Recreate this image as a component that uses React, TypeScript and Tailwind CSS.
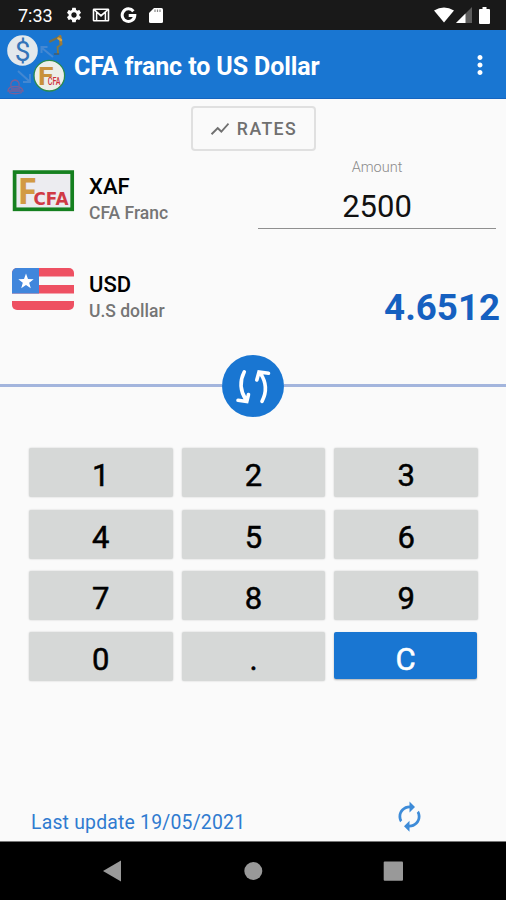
import React from 'react';
import { MdAutorenew, MdMoreVert, MdSettings, MdShowChart } from 'react-icons/md';
import clsx from 'clsx';

const KEYS = ['1', '2', '3', '4', '5', '6', '7', '8', '9', '0', '.', 'C'];

export default function App() {
  return (
    <div className="w-[506px] h-[900px] flex flex-col overflow-hidden bg-[#fafafa] font-['Roboto',sans-serif] text-black">
      <StatusBar />
      <AppBar />

      <main className="flex-1 min-h-0 flex flex-col">
        <div className="h-[52px] flex justify-center pt-[7px]">
          <button className="w-[125px] h-[45px] flex items-center justify-center gap-[6px] rounded border-2 border-[#e0e0e0] text-[#707070]">
            <MdShowChart className="w-[22px] h-[22px]" />
            <span className="pt-[2px] text-[17.7px] leading-none font-medium tracking-[1.4px]">RATES</span>
          </button>
        </div>

        {/* Source currency */}
        <div className="h-[98px] flex">
          <CurrencyLabel code="XAF" name="CFA Franc" flag={<CfaFlag />} />
          <div className="ml-auto mr-[10px] w-[238px] flex flex-col items-center">
            <span className="mt-[8px] text-[14.5px] leading-[17px] font-light text-[#8a8a8a]">Amount</span>
            <div className="h-[53px] w-full border-b-[1.5px] border-[#8f8f8f] text-center text-[31px] leading-[62px] text-[#111]">
              2500
            </div>
          </div>
        </div>

        {/* Converted amount */}
        <div className="h-[105.5px] flex">
          <CurrencyLabel code="USD" name="U.S dollar" flag={<UsFlag />} />
          <span className="ml-auto mr-[6px] mt-[38px] text-[36.7px] leading-[42px] font-bold text-[#1560c0]">
            4.6512
          </span>
        </div>

        {/* Swap */}
        <div className="h-[62px] flex items-center">
          <div className="flex-1 h-[3px] bg-[#a3b5dd]" />
          <button className="w-[62px] h-[62px] rounded-full bg-[#1976d2]">
            <SwapIcon />
          </button>
          <div className="flex-1 h-[3px] bg-[#a3b5dd]" />
        </div>

        {/* Keypad */}
        <div className="mt-[31.7px] ml-[29px] mr-[28px] grid grid-cols-3 gap-x-[9px] gap-y-[12.4px]">
          {KEYS.map(key => (
            <button
              key={key}
              className={clsx(
                'rounded-[2px] pt-px text-[31px] leading-[53px] [-webkit-text-stroke:0.5px]',
                key === 'C'
                  ? 'h-[47px] mr-px bg-[#1976d2] text-white shadow-[0_1px_2px_rgba(0,0,0,0.3)]'
                  : 'h-[49px] bg-[#d6d8d7] shadow-[0_0_2px_rgba(0,0,0,0.2)]'
              )}
            >
              {key}
            </button>
          ))}
        </div>

        <div className="mt-auto mb-[6px] pl-[31px] pr-[80px] flex items-center justify-between">
          <span className="mt-[13px] text-[19.4px] leading-6 tracking-[0.2px] text-[#2f7bd0]">
            Last update 19/05/2021
          </span>
          <MdAutorenew className="w-[33px] h-[33px] text-[#3d8bd8]" />
        </div>
      </main>

      <NavBar />
    </div>
  );
}

function StatusBar() {
  return (
    <div className="h-[30px] shrink-0 bg-[#191919] text-white flex items-center pl-[18px] pr-[16px]">
      <span className="w-[47px] text-[18px] leading-none pt-[2px]">7:33</span>
      <MdSettings className="w-[18px] h-[18px]" />
      <svg className="ml-[9px] w-[18px] h-[14px]" viewBox="0 0 18 14" fill="none" stroke="currentColor">
        <rect x="1.5" y="1.2" width="15" height="11.6" rx="0.5" strokeWidth="1.6" />
        <path d="M4.6 12.5V4l4.4 4 4.4-4v8.5M2 1.7l7 5.8 7-5.8" strokeWidth="1.5" />
      </svg>
      <svg className="ml-[10px] w-[17px] h-[17px]" viewBox="0 0 17 17" fill="none" stroke="currentColor" strokeWidth="3">
        <path d="M13.4 4.2A6.3 6.3 0 1 0 14.8 8.4H8.7" />
      </svg>
      <svg className="ml-[12px] w-[14px] h-[17px]" viewBox="0 0 14 17">
        <path d="M5 1h7.5Q14 1 14 2.5V14.5Q14 16 12.5 16H1.5Q0 16 0 14.5V6Z" fill="currentColor" />
        <path d="M6 2.5v2.5M8.5 2.5v2.5M11 2.5v2.5" stroke="#888" strokeWidth="1.2" />
      </svg>

      <svg className="ml-auto w-[20px] h-[16px]" viewBox="0 0 20 16">
        <path d="M0 3.5Q10-2.5 20 3.5L10 15.5Z" fill="currentColor" />
      </svg>
      <svg className="ml-[2px] w-[16px] h-[16px]" viewBox="0 0 16 16">
        <path d="M0 16 16 0V16Z" fill="#5c5c5c" />
        <path d="M0 16 9.5 6.5V16Z" fill="currentColor" />
      </svg>
      <svg className="ml-[7px] w-[11px] h-[17px]" viewBox="0 0 11 17">
        <path d="M3.5 0h4v2H10q1 0 1 1v13q0 1-1 1H1q-1 0-1-1V3q0-1 1-1h2.5Z" fill="currentColor" />
      </svg>
    </div>
  );
}

function AppBar() {
  return (
    <header className="h-[69px] shrink-0 bg-[#1976d2] border-b border-[#1565c0] text-white flex items-center">
      <AppLogo />
      <h1 className="ml-[6px] mt-[5px] text-[25px] leading-none font-bold tracking-[-0.1px]">
        CFA franc to US Dollar
      </h1>
      <MdMoreVert className="ml-auto mr-[11px] mt-px w-[30px] h-[30px]" />
    </header>
  );
}

function AppLogo() {
  return (
    <svg className="w-[68px] h-[68px] shrink-0" viewBox="0 30 68 68">
      <circle cx="22.5" cy="50.5" r="15.3" fill="#e2e8ec" />
      <text x="22.5" y="60.5" textAnchor="middle" fontSize="28" fontFamily="Roboto" fill="#3474b8">
        $
      </text>
      {/* conversion arrows */}
      <g fill="none" stroke="#4488d2" strokeWidth="2">
        <path d="M53 57 42 48M47.5 47h-6v6" />
        <path d="M18 71l11 10M30 74v8h-7" />
      </g>
      {/* golden figure */}
      <g fill="none" strokeLinecap="round" strokeLinejoin="round">
        <path d="M50 41.5 55 39 59 37" stroke="#77704c" strokeWidth="2.2" />
        <path d="M60 36.5 61 44" stroke="#a07b38" strokeWidth="3" />
        <path d="M60.5 45 57.5 47 58 53" stroke="#8b793e" strokeWidth="1.8" />
        <path d="M58.5 38.5 61 40" stroke="#dca23a" strokeWidth="2.6" />
        <path d="M54.5 54h4" stroke="#495c65" strokeWidth="1.5" />
      </g>
      {/* red stamp */}
      <g fill="none" stroke="#7a5f98" strokeWidth="1.3">
        <path d="M11 86q-1-5 4-6 5 1 4 6M8 91q0-4.5 7-4.5t8 4.5ZM11 89h9" />
        <path d="M9 92.5q6 2.5 13 0" />
      </g>
      <circle cx="49.3" cy="75.7" r="15.3" fill="#eceee9" stroke="#2a8a4e" strokeWidth="1.3" />
      <text x="38" y="85" fontSize="26.5" fontWeight="700" fontFamily="Roboto" textLength="15.5" lengthAdjust="spacingAndGlyphs" fill="#c8913b">
        F
      </text>
      <text x="47.8" y="84.8" fontSize="10.5" fontWeight="500" fontFamily="Roboto" textLength="12.8" lengthAdjust="spacingAndGlyphs" fill="#d0313c">
        CFA
      </text>
    </svg>
  );
}

function CurrencyLabel({ code, name, flag }: {
  code: string;
  name: string;
  flag: React.ReactNode;
}) {
  return (
    <div className="flex pl-[12px]">
      <div className="pt-[19px]">{flag}</div>
      <div className="ml-[15px] pt-[23px]">
        <p className="text-[22px] leading-[26px] font-medium">{code}</p>
        <p className="mt-[2px] text-[17.5px] leading-[22px] font-medium text-[#757575]">{name}</p>
      </div>
    </div>
  );
}

function CfaFlag() {
  return (
    <svg className="w-[62px] h-[42px] overflow-visible" viewBox="0 0 62 42">
      <rect x="2.6" y="2.1" width="57.6" height="37.2" fill="#ececf0" stroke="#15801f" strokeWidth="3.7" />
      <text x="5.5" y="33.5" fontSize="35.5" fontWeight="700" fontFamily="Open Sans" textLength="19.5" lengthAdjust="spacingAndGlyphs" fill="#d29a43">
        F
      </text>
      <text x="21.5" y="35" fontSize="17.5" fontWeight="700" fontFamily="DejaVu Sans" textLength="35" lengthAdjust="spacingAndGlyphs" fill="#d03a45">
        CFA
      </text>
    </svg>
  );
}

function UsFlag() {
  return (
    <svg className="w-[62px] h-[42px] rounded-[5px]" viewBox="0 0 62 42">
      <rect width="62" height="42" fill="#f9f9f9" />
      <path d="M0 0h62v8.5H0zM0 17h62v8.5H0zM0 33h62v9H0z" fill="#ee5062" />
      <path d="M0 0h27v25.5H0z" fill="#4086dc" />
      <path d="M14 5.5l2 5.4 5.7.3-4.5 3.5 1.6 5.5-4.8-3.2-4.8 3.2 1.6-5.5-4.5-3.5 5.7-.3z" fill="white" />
    </svg>
  );
}

function SwapIcon() {
  return (
    <svg
      className="w-[62px] h-[62px]"
      viewBox="0 0 62 62"
      fill="none"
      stroke="white"
      strokeWidth="3.6"
      strokeLinecap="round"
    >
      <path d="M22.3 16.8Q15 31 24 45M16 45.3 24.8 46.5 26.5 39.5" />
      <path d="M40 46.3Q47.5 32 38.5 18.5M34.8 25 37 17 46.5 18.3" />
    </svg>
  );
}

function NavBar() {
  return (
    <nav className="h-[59px] shrink-0 bg-black border-t border-[#777] text-[#999]">
      <svg className="w-full h-[58px]" viewBox="0 842 506 58" fill="currentColor">
        <path d="M103 871 121 860.5V881.5Z" />
        <circle cx="253.3" cy="871" r="9" />
        <rect x="383.7" y="861.5" width="19.3" height="19.3" rx="1" />
      </svg>
    </nav>
  );
}
